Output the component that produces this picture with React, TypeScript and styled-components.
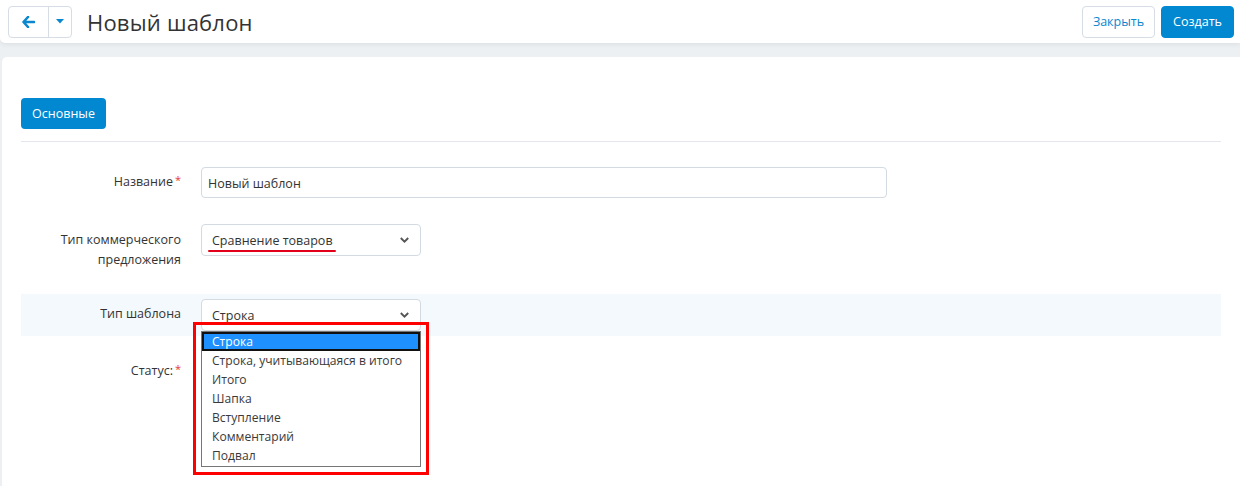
import React from "react";
import styled, { createGlobalStyle } from "styled-components";

const Global = createGlobalStyle`
  html, body { margin: 0; padding: 0; }
  body {
    background: #edf0f3;
    font-family: "Open Sans", "Noto Sans", sans-serif;
    color: #333;
    font-size: 12.5px;
    width: 1240px;
    height: 486px;
    overflow: hidden;
  }
  * { box-sizing: border-box; }
`;

const Page = styled.div`
  display: flex;
  flex-direction: column;
  gap: 14px;
  height: 486px;
`;

const TopBar = styled.header`
  display: flex;
  align-items: center;
  height: 43px;
  padding: 0 6px 0 8px;
  background: #fff;
  border-bottom-left-radius: 5px;
  box-shadow: 0 2px 4px rgba(0, 0, 0, 0.06);
`;

const BtnGroup = styled.div`
  display: flex;
  height: 32px;
  border: 1px solid #d6dde4;
  border-radius: 4px;
  background: #fff;
`;

const GroupBtn = styled.button<{ $w: number; $sep?: boolean }>`
  width: ${(p) => p.$w}px;
  height: 100%;
  display: flex;
  align-items: center;
  justify-content: center;
  border: 0;
  background: transparent;
  padding: 0;
  border-left: ${(p) => (p.$sep ? "1px solid #d6dde4" : "0")};
  color: #0a87cf;
`;

const Title = styled.h1`
  margin: 0 0 0 15px;
  font-size: 22px;
  font-weight: 400;
  color: #333;
  flex: 1;
  letter-spacing: 0.2px;
`;

const Btn = styled.button<{ $primary?: boolean }>`
  width: 73px;
  height: 32px;
  padding: 0;
  margin-left: 6px;
  border-radius: 4px;
  font-family: inherit;
  font-size: 12.5px;
  border: 1px solid ${(p) => (p.$primary ? "#0288d1" : "#d6dde4")};
  background: ${(p) => (p.$primary ? "#0288d1" : "#fff")};
  color: ${(p) => (p.$primary ? "#fff" : "#0a87cf")};
`;

const Card = styled.main`
  flex: 1;
  margin-left: 2px;
  background: #fff;
  border-top-left-radius: 5px;
  padding: 41px 19px 0 19px;
`;

const Tabs = styled.div`
  display: flex;
  padding-bottom: 12px;
  border-bottom: 1px solid #e3e6ec;
`;

const Tab = styled.button`
  height: 31px;
  width: 85px;
  padding: 0;
  border: 0;
  border-radius: 4px;
  background: #0288d1;
  color: #fff;
  font-family: inherit;
  font-size: 12.5px;
`;

const Form = styled.div`
  display: flex;
  flex-direction: column;
  padding-top: 20px;
`;

const Row = styled.div<{ $gap: number; $hl?: boolean }>`
  position: relative;
  display: grid;
  grid-template-columns: 180px 1fr;
  align-items: start;
  margin-top: ${(p) => p.$gap}px;
  padding: 5px 0;
  background: ${(p) => (p.$hl ? "#f3f9fd" : "transparent")};
`;

const Label = styled.div<{ $pt: number }>`
  text-align: right;
  padding-right: 20px;
  padding-top: ${(p) => p.$pt}px;
  line-height: 20px;
  color: #333;
`;

const Req = styled.span`
  color: #e53935;
  margin-left: 2px;
  font-size: 11px;
  position: relative;
  top: -2px;
`;

const TextInput = styled.div`
  width: 686px;
  height: 31px;
  border: 1px solid #d3dae2;
  border-radius: 4px;
  padding: 1px 6px 0;
  display: flex;
  align-items: center;
  background: #fff;
`;

const SelectBox = styled.div`
  position: relative;
  width: 220px;
  height: 32px;
  border: 1px solid #d3dae2;
  border-radius: 4px;
  padding: 0 10px;
  display: flex;
  align-items: center;
  justify-content: space-between;
  background: #fff;
`;

const Underlined = styled.span`
  position: relative;
  &::after {
    content: "";
    position: absolute;
    left: -4px;
    right: -3px;
    bottom: -3px;
    height: 2px;
    border-radius: 1px;
    background: #e3001b;
  }
`;

const Chevron = () => (
  <svg width="11" height="8" viewBox="0 0 11 8">
    <path d="M1.8 2 L5.5 5.6 L9.2 2" stroke="#555" strokeWidth="1.9" fill="none" />
  </svg>
);

const ListBox = styled.ul`
  position: absolute;
  left: 180px;
  top: 37px;
  width: 220px;
  margin: 0;
  padding: 0 0 1px;
  list-style: none;
  background: #fff;
  border: 1px solid #767676;
  z-index: 5;
  font-size: 12.1px;
`;

const Option = styled.li<{ $sel?: boolean }>`
  height: 19px;
  white-space: nowrap;
  color: ${(p) => (p.$sel ? "#fff" : "#3a3a3a")};
  background: ${(p) => (p.$sel ? "#1e90ff" : "transparent")};
  border: ${(p) => (p.$sel ? "2px solid #111" : "0")};
  padding-left: ${(p) => (p.$sel ? "8px" : "10px")};
  line-height: ${(p) => (p.$sel ? "15px" : "19px")};
`;

const Marker = styled.div`
  position: absolute;
  left: 172px;
  top: 28px;
  width: 236px;
  height: 153px;
  border: 3px solid #ff0000;
  z-index: 4;
`;

const options = [
  "Строка",
  "Строка, учитывающаяся в итого",
  "Итого",
  "Шапка",
  "Вступление",
  "Комментарий",
  "Подвал",
];

export default function App() {
  return (
    <>
      <Global />
      <Page>
        <TopBar>
          <BtnGroup>
            <GroupBtn $w={39}>
              <svg width="13" height="12" viewBox="0 0 13 12">
                <path
                  d="M6 1 L1.5 6 L6 11 M1.8 6 H12"
                  stroke="#0a87cf"
                  strokeWidth="2.6"
                  fill="none"
                  strokeLinecap="round"
                  strokeLinejoin="round"
                />
              </svg>
            </GroupBtn>
            <GroupBtn $w={23} $sep>
              <svg width="8" height="5" viewBox="0 0 8 5">
                <path d="M0 0 H8 L4 4.5 Z" fill="#0a87cf" />
              </svg>
            </GroupBtn>
          </BtnGroup>
          <Title>Новый шаблон</Title>
          <Btn>Закрыть</Btn>
          <Btn $primary>Создать</Btn>
        </TopBar>
        <Card>
          <Tabs>
            <Tab>Основные</Tab>
          </Tabs>
          <Form>
            <Row $gap={0}>
              <Label $pt={5}>
                Название<Req>*</Req>
              </Label>
              <TextInput>Новый шаблон</TextInput>
            </Row>
            <Row $gap={16}>
              <Label $pt={6}>
                Тип коммерческого
                <br />
                предложения
              </Label>
              <SelectBox>
                <Underlined>Сравнение товаров</Underlined>
                <Chevron />
              </SelectBox>
            </Row>
            <Row $gap={19} $hl>
              <Label $pt={5}>Тип шаблона</Label>
              <SelectBox>
                <span>Строка</span>
                <Chevron />
              </SelectBox>
              <Marker />
              <ListBox>
                {options.map((o, i) => (
                  <Option key={o} $sel={i === 0}>
                    {o}
                  </Option>
                ))}
              </ListBox>
            </Row>
            <Row $gap={19}>
              <Label $pt={1}>
                Статус:<Req>*</Req>
              </Label>
              <div />
            </Row>
          </Form>
        </Card>
      </Page>
    </>
  );
}
